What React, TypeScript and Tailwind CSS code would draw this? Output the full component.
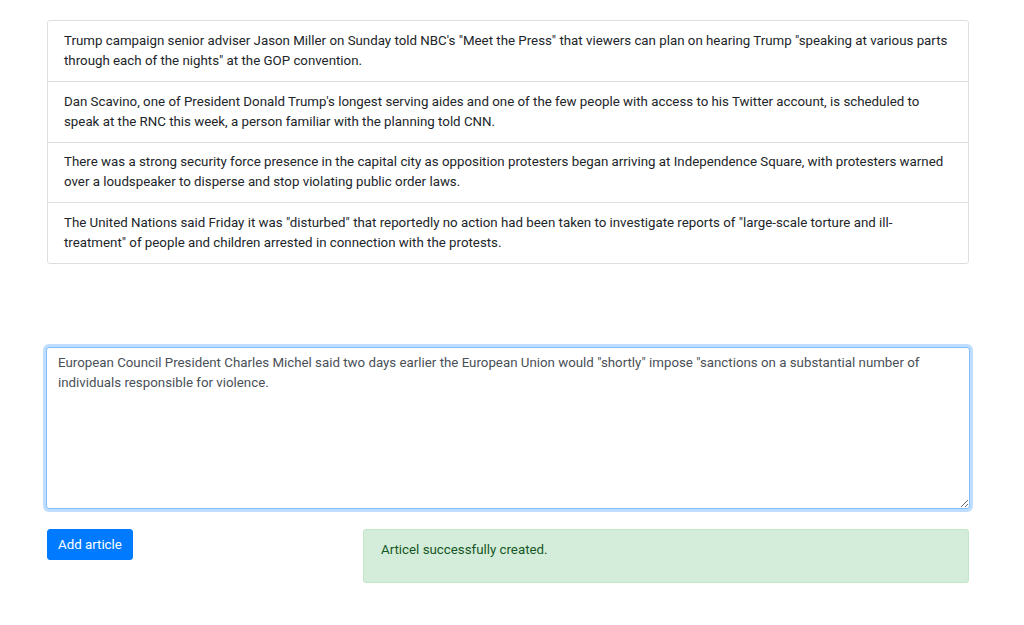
import { useEffect, useRef } from "react";

const articles = [
  'Trump campaign senior adviser Jason Miller on Sunday told NBC\'s "Meet the Press" that viewers can plan on hearing Trump "speaking at various parts through each of the nights" at the GOP convention.',
  "Dan Scavino, one of President Donald Trump's longest serving aides and one of the few people with access to his Twitter account, is scheduled to speak at the RNC this week, a person familiar with the planning told CNN.",
  "There was a strong security force presence in the capital city as opposition protesters began arriving at Independence Square, with protesters warned over a loudspeaker to disperse and stop violating public order laws.",
  'The United Nations said Friday it was "disturbed" that reportedly no action had been taken to investigate reports of "large-scale torture and ill-treatment" of people and children arrested in connection with the protests.',
];

const draft =
  'European Council President Charles Michel said two days earlier the European Union would "shortly" impose "sanctions on a substantial number of individuals responsible for violence.';

export default function App() {
  const ref = useRef<HTMLTextAreaElement>(null);

  useEffect(() => {
    const el = ref.current;
    if (!el) return;
    el.focus();
    el.setSelectionRange(draft.length, draft.length);
  }, []);

  return (
    <div className="min-h-screen bg-white font-['Roboto','Liberation_Sans',sans-serif] text-[13.3px] leading-[20px] text-[#212529]">
      <div className="w-[922px] ml-[47px] pt-[20px]">
        {/* Article list */}
        <ul className="border border-[#dfdfdf] rounded-[3px]">
          {articles.map((a, i) => (
            <li
              key={i}
              className={`px-[16px] py-[9.9px] ${i > 0 ? "border-t border-[#dfdfdf]" : ""}`}
            >
              {a}
            </li>
          ))}
        </ul>

        {/* Editor */}
        <textarea
          ref={ref}
          defaultValue={draft}
          className="block w-[924px] -ml-[1px] mt-[83px] h-[162px] px-[11px] py-[5px] text-[#495057] bg-white border border-[#80bdff] rounded-[3px] shadow-[0_0_0_3px_rgba(0,123,255,0.25)] outline-none caret-[#495057]"
        />

        <div className="flex items-start mt-[20px]">
          <div className="w-[316px]">
            <button className="h-[31px] px-[10px] bg-[#007bff] text-white rounded-[3px] border border-[#007bff]">
              Add article
            </button>
          </div>
          <div className="flex-1 h-[54px] px-[17px] pt-[10px] bg-[#d4edda] border border-[#c3e6cb] text-[#155724] rounded-[3px]">
            Articel successfully created.
          </div>
        </div>
      </div>
    </div>
  );
}
